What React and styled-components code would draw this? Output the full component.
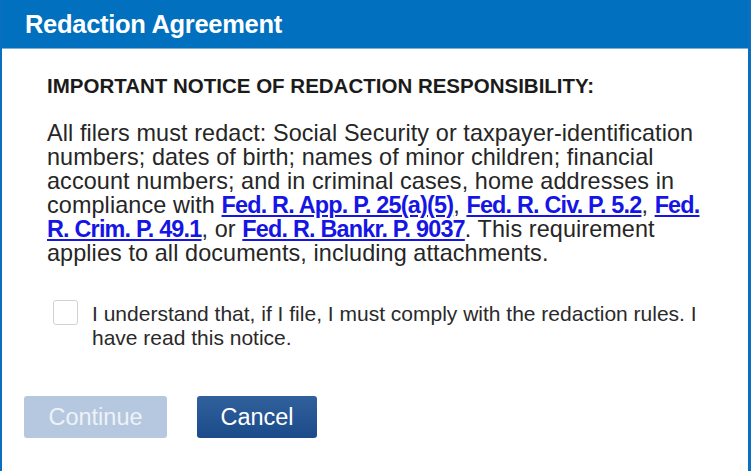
import styled, { createGlobalStyle } from 'styled-components';

const GlobalStyle = createGlobalStyle`
  html, body {
    margin: 0;
    padding: 0;
    background: #ffffff;
  }
  body {
    font-family: "Liberation Sans", Arial, sans-serif;
  }
`;

const Dialog = styled.div`
  width: 751px;
  height: 471px;
  box-sizing: border-box;
  border-left: 2px solid #0a6fc0;
  border-right: 3px solid #0a6fc0;
  display: flex;
  flex-direction: column;
  background: #fff;
`;

const Header = styled.div`
  height: 48px;
  background: #0070bf;
  border-bottom: 1px solid #7fb0dc;
  display: flex;
  align-items: center;
  padding-left: 23px;
  color: #fff;
  font-size: 25.5px;
  font-weight: 700;
  letter-spacing: -0.3px;
`;

const Body = styled.div`
  padding: 26px 10px 0 45px;
  color: #1b1b1b;
`;

const Heading = styled.div`
  font-size: 20.5px;
  font-weight: 700;
  line-height: 22px;
`;

const Notice = styled.p`
  margin: 24px 0 0;
  font-size: 23.4px;
  line-height: 24px;
  letter-spacing: 0.1px;
  color: #262626;
  white-space: nowrap;
`;

const RuleLink = styled.a`
  color: #1515e6;
  font-weight: 700;
  letter-spacing: -0.8px;
  text-decoration: underline;
  text-underline-offset: 2px;
`;

const AgreeRow = styled.label`
  display: flex;
  align-items: flex-start;
  gap: 14px;
  margin: 37px 0 0 6px;
`;

const Box = styled.span`
  flex: none;
  width: 25px;
  height: 25px;
  box-sizing: border-box;
  margin-top: -2px;
  border: 1.5px solid #d2d2d2;
  border-radius: 3px;
  background: #fff;
`;

const AgreeText = styled.span`
  font-size: 21px;
  line-height: 24px;
  color: #2a2a2a;
  white-space: nowrap;
`;

const Actions = styled.div`
  display: flex;
  gap: 30px;
  padding: 46px 0 0 22px;
`;

const Button = styled.button`
  height: 42px;
  border: none;
  border-radius: 3px;
  padding: 0;
  font-family: inherit;
  font-size: 23.5px;
  color: ${p => (p.$disabled ? '#eef2f8' : '#ffffff')};
  background: ${p =>
    p.$disabled
      ? '#b5c8df'
      : 'linear-gradient(#31619c, #1c4a8a)'};
  width: ${p => p.$w}px;
`;

export default function App() {
  return (
    <>
      <GlobalStyle />
      <Dialog>
        <Header>Redaction Agreement</Header>
        <Body>
          <Heading>IMPORTANT NOTICE OF REDACTION RESPONSIBILITY:</Heading>
          <Notice>
            All filers must redact: Social Security or taxpayer-identification<br />
            numbers; dates of birth; names of minor children; financial<br />
            account numbers; and in criminal cases, home addresses in<br />
            compliance with <RuleLink href="#">Fed. R. App. P. 25(a)(5)</RuleLink>,{' '}
            <RuleLink href="#">Fed. R. Civ. P. 5.2</RuleLink>, <RuleLink href="#">Fed.</RuleLink><br />
            <RuleLink href="#">R. Crim. P. 49.1</RuleLink>, or{' '}
            <RuleLink href="#">Fed. R. Bankr. P. 9037</RuleLink>. This requirement<br />
            applies to all documents, including attachments.
          </Notice>
          <AgreeRow>
            <Box />
            <AgreeText>
              I understand that, if I file, I must comply with the redaction rules. I<br />
              have read this notice.
            </AgreeText>
          </AgreeRow>
        </Body>
        <Actions>
          <Button $disabled $w={143}>Continue</Button>
          <Button $w={120}>Cancel</Button>
        </Actions>
      </Dialog>
    </>
  );
}
